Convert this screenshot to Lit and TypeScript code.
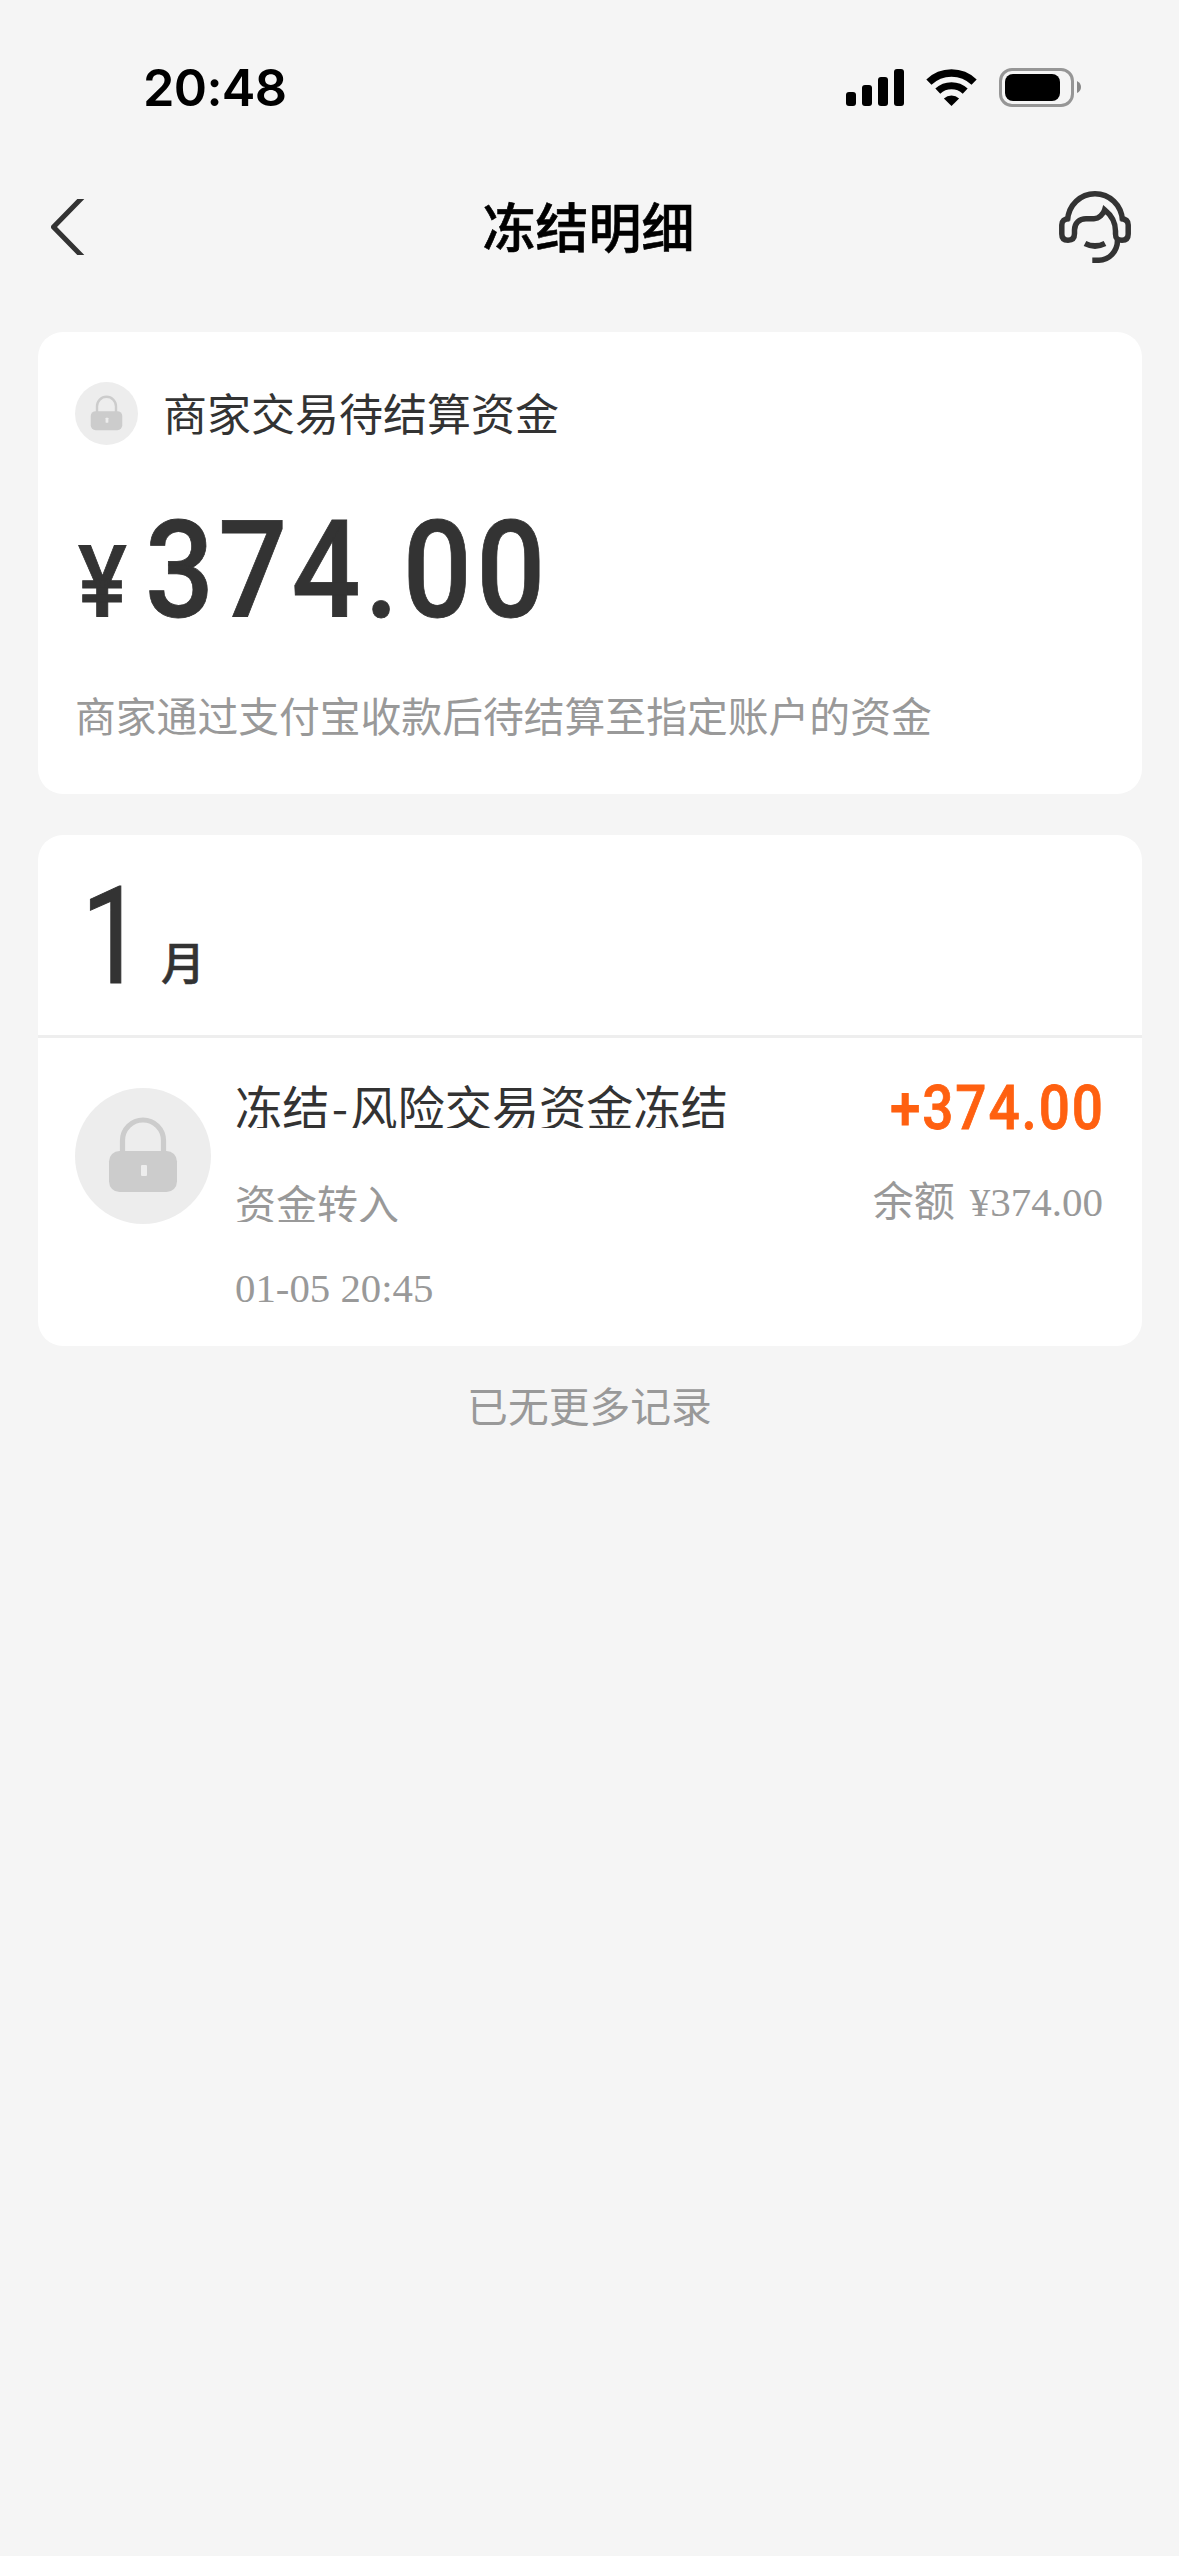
import { LitElement, html, css, svg } from "lit";
import { customElement, property } from "lit/decorators.js";

@customElement("lock-badge")
class LockBadge extends LitElement {
  static styles = css`
    :host { display: block; flex: none; }
    svg { display: block; width: 100%; height: 100%; }
  `;
  render() {
    return html`<svg viewBox="0 0 136 136">
      <circle cx="68" cy="68" r="68" fill="#ededed" />
      <path d="M47.5 66V52.5a20.5 20.5 0 0 1 41 0V66" fill="none" stroke="#ccc" stroke-width="5.2" />
      <rect x="34" y="63" width="68" height="41" rx="10.5" fill="#ccc" />
      <rect x="66" y="77" width="6" height="11" rx="1" fill="#ededed" />
    </svg>`;
  }
}

@customElement("status-bar")
class StatusBar extends LitElement {
  @property() time = "";
  static styles = css`
    :host { display: flex; height: 174px; box-sizing: border-box; padding: 58px 98px 56px 143px;
      justify-content: space-between; align-items: center; color: #000; }
    .time { font: 600 50.5px/60px Inter, "Liberation Sans", sans-serif; letter-spacing: -0.7px; white-space: nowrap; }
    svg { display: block; }
  `;
  render() {
    const bars = [[0, 92], [16, 85], [32, 77], [48, 69]];
    return html`
      <span class="time">${this.time}</span>
      <svg width="235" height="60" viewBox="846 58 235 60">
        ${bars.map(([x, y]) => svg`<rect x=${846 + x} y=${y} width="10" height=${106 - y} rx="3" />`)}
        <g fill="none" stroke="#000">
          <path d="M928.9 82.1a32.5 32.5 0 0 1 45.2 0" stroke-width="7.4" />
          <path d="M937.8 91.2a20 20 0 0 1 27.4 0" stroke-width="7.2" />
        </g>
        <path d="M951.5 106l-7.6-7.6a11.2 11.2 0 0 1 15.2 0z" />
        <rect x="1000.5" y="69.5" width="72" height="36" rx="11.5" fill="none" stroke="#969696" stroke-width="3" />
        <rect x="1005" y="74" width="55" height="27" rx="8" />
        <path d="M1077 81q4 2 4 6t-4 6z" fill="#888" />
      </svg>`;
  }
}

@customElement("nav-bar")
class NavBar extends LitElement {
  @property() heading = "";
  static styles = css`
    :host { display: flex; height: 106px; box-sizing: border-box; padding: 0 48px 0 51px;
      justify-content: space-between; align-items: center; }
    .side { width: 72px; height: 72px; display: block; }
    h1 { margin: 0; padding: 0 5px 5px 0; font: 500 53px/72px "Noto Sans CJK SC", sans-serif; color: #000;
      -webkit-text-stroke: 0.6px currentColor; }
  `;
  render() {
    return html`
      <svg class="side" viewBox="51 191 72 72">
        <path d="M77.3 199H84.3L57 227L84.3 255H77.3L51.4 228.500Q50.500 227 51.4 225.500Z" fill="#333" />
      </svg>
      <h1>${this.heading}</h1>
      <svg class="side" viewBox="0 0 72 72" fill="none" stroke="#333" stroke-width="5.5">
        <path d="M8.500 29.500C9.500 14 21.500 2.800 36 2.800S62.500 14 63.500 29.500" />
        <path d="M10.500 27.700C5 27.700 2.800 30 2.800 34V43C2.800 47.500 5 49.200 9 49.200C13.500 49.200 15.500 47 15.500 42.500V39C15.500 32 20.500 27.700 27 27.700H35C40 27.700 44.500 23 45.700 18.800C51 23 56.500 30 56.500 40V43C56.500 47.500 58.500 49.200 63 49.200C67 49.200 69.200 47.500 69.200 43V34C69.200 30 67 27.700 61.500 27.700" />
        <path d="M58.500 49C58.500 61 49.500 69.200 40 69.200H33.300" />
        <path d="M26 52.500Q36 57.500 46 52.500" stroke-width="5.800" />
      </svg>`;
  }
}

@customElement("app-root")
class AppRoot extends LitElement {
  private records = [
    { title: ["冻结", "风险交易资金冻结"], kind: "资金转入", time: "01-05 20:45", amount: "+374.00", balance: "¥374.00" },
  ];

  static styles = css`
    :host { display: block; min-height: 2556px; background: #f5f5f5; color: #333;
      font-family: "Noto Sans CJK SC", sans-serif; white-space: nowrap; overflow: hidden; }
    .content { display: flex; flex-direction: column; padding: 52px 37px 0 38px; }
    .card { background: #fff; border-radius: 25px; box-sizing: border-box; }
    .summary { height: 462px; padding: 50px 37px; }
    .source { display: flex; align-items: center; gap: 25px; height: 63px; font-size: 44px; line-height: 60px; }
    .source span { padding-bottom: 4px; }
    .source lock-badge { width: 63px; height: 63px; }
    .total { display: flex; align-items: baseline; margin-top: 58px; height: 136px;
      font: 500 135px/136px Roboto, sans-serif; -webkit-text-stroke: 0.8px currentColor; }
    .yen { font-size: 101px; width: 67px; margin-left: 3px; transform: scaleX(0.91); transform-origin: left; }
    .sum { letter-spacing: 4.7px; transform: scaleX(0.9); transform-origin: left; }
    .note { margin-top: 47px; font-size: 40.8px; line-height: 58px; color: #999; }
    .history { margin-top: 41px; height: 511px; }
    .month { display: flex; align-items: baseline; gap: 4px; height: 200px; box-sizing: border-box;
      padding: 34px 43px 0; }
    .num { font: 400 135px/136px Roboto, sans-serif; transform: scaleX(0.83); transform-origin: left;
      -webkit-text-stroke: 1px currentColor; }
    .unit { font-size: 44px; line-height: 60px; font-weight: 500; padding-bottom: 3px; transform: translateY(-3px);
      -webkit-text-stroke: 0.6px currentColor; }
    .row { display: flex; border-top: 3px solid #eee; padding: 0 39px 0 37px; }
    .row lock-badge { width: 136px; height: 136px; margin-top: 50px; }
    .info { flex: 1; padding: 34px 0 0 24px; }
    .title { font-size: 47.2px; line-height: 68px; clip-path: inset(0 0 12px 0); }
    .dash { margin: 0 2.3px; }
    .kind { margin-top: 30px; font-size: 41px; line-height: 64px; clip-path: inset(0 0 12px 0); color: #999; }
    .time { margin-top: 33px; font: 40.8px/44px "Liberation Serif", serif; color: #999; }
    .figures { padding-top: 48px; text-align: right; }
    .amount { font: 500 61px/44px Roboto, sans-serif; letter-spacing: 2.1px; color: #ff6010;
      transform: scaleX(0.9); transform-origin: right; margin-right: -2px; -webkit-text-stroke: 0.8px currentColor; }
    .balance { margin-top: 48px; font-size: 41px; line-height: 40px; color: #999; }
    .serif { font-family: "Liberation Serif", serif; margin-left: 15px; }
    .end { margin-top: 29px; padding-right: 1px; font-size: 40.8px; line-height: 60px; color: #999; text-align: center; }
  `;

  render() {
    return html`
      <status-bar time="20:48"></status-bar>
      <nav-bar heading="冻结明细"></nav-bar>
      <div class="content">
        <section class="card summary">
          <div class="source"><lock-badge></lock-badge><span>商家交易待结算资金</span></div>
          <div class="total"><div class="yen">¥</div><div class="sum">374.00</div></div>
          <div class="note">商家通过支付宝收款后待结算至指定账户的资金</div>
        </section>
        <section class="card history">
          <div class="month"><div class="num">1</div><div class="unit">月</div></div>
          ${this.records.map((r) => html`
            <div class="row">
              <lock-badge></lock-badge>
              <div class="info">
                <div class="title">${r.title[0]}<span class="dash">-</span>${r.title[1]}</div>
                <div class="kind">${r.kind}</div>
                <div class="time">${r.time}</div>
              </div>
              <div class="figures">
                <div class="amount">${r.amount}</div>
                <div class="balance">余额<span class="serif">${r.balance}</span></div>
              </div>
            </div>`)}
        </section>
        <div class="end">已无更多记录</div>
      </div>`;
  }
}
